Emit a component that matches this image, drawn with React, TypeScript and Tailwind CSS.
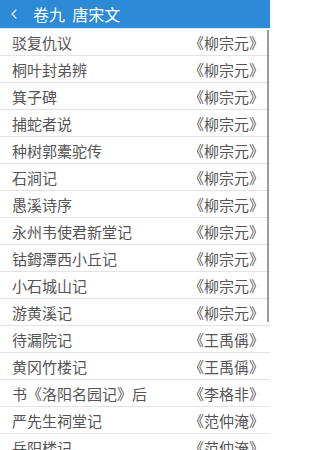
import { ChevronLeft } from 'lucide-react';

const rows: [string, string][] = [
  ['驳复仇议', '《柳宗元》'],
  ['桐叶封弟辨', '《柳宗元》'],
  ['箕子碑', '《柳宗元》'],
  ['捕蛇者说', '《柳宗元》'],
  ['种树郭橐驼传', '《柳宗元》'],
  ['石涧记', '《柳宗元》'],
  ['愚溪诗序', '《柳宗元》'],
  ['永州韦使君新堂记', '《柳宗元》'],
  ['钴鉧潭西小丘记', '《柳宗元》'],
  ['小石城山记', '《柳宗元》'],
  ['游黄溪记', '《柳宗元》'],
  ['待漏院记', '《王禹偁》'],
  ['黄冈竹楼记', '《王禹偁》'],
  ['书《洛阳名园记》后', '《李格非》'],
  ['严先生祠堂记', '《范仲淹》'],
  ['岳阳楼记', '《范仲淹》'],
];

export default function App() {
  return (
    <div
      className="relative h-[450px] w-[270px] overflow-hidden bg-white"
      style={{ fontFamily: '"Noto Sans CJK SC", "Noto Sans", sans-serif' }}
    >
      <div className="flex h-[28px] items-center bg-[#2d8ad6] text-white">
        <ChevronLeft className="ml-[6px] h-[16px] w-[16px]" strokeWidth={1.6} />
        <span className="ml-[11px] text-[16px] leading-none">卷九&nbsp;&nbsp;唐宋文</span>
      </div>
      <div className="h-px bg-[#d6ecfa]" />
      <ul>
        {rows.map(([title, author], i) => (
          <li
            key={i}
            className="flex h-[27px] items-center justify-between border-b border-[#e3e3e3] pl-[12px] pr-[6px] text-[15px] leading-none text-[#555]"
          >
            <span>{title}</span>
            <span>{author}</span>
          </li>
        ))}
      </ul>
      <div className="absolute right-[1px] top-[30px] h-[292px] w-[2px] bg-[#9a9a9a]" />
    </div>
  );
}
